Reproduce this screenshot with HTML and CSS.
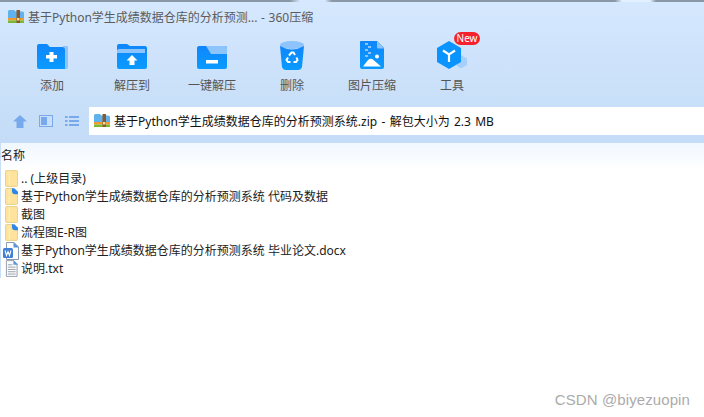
FILE: index.html
```html
<!DOCTYPE html>
<html lang="zh-CN">

<head>
    <meta charset="UTF-8">
    <title>基于Python学生成绩数据仓库的分析预测系统.zip - 360压缩</title>
    <link rel="stylesheet" href="styles.css">
</head>

<body>
    <svg class="defs" width="0" height="0">
        <defs>
            <linearGradient id="blue" x1="0" y1="0" x2="0" y2="1">
                <stop offset="0" stop-color="#0f86fb" />
                <stop offset="1" stop-color="#0a9bff" />
            </linearGradient>
            <symbol id="zipicon" viewBox="0 0 16 16">
                <path d="M0 2.500Q0 1 1.500 1H6l1.500 1.500H14.500Q16 2.500 16 4V9H0Z" fill="#5fb2ee" />
                <rect y="9" width="16" height="2.500" fill="#f09a2c" />
                <rect y="11.500" width="16" height="2.500" fill="#7cb834" />
                <rect x="8.500" y="1" width="3.500" height="13" fill="#8a5a2b" />
                <rect x="9" y="9" width="2.500" height="2.500" fill="#f6dc9a" />
            </symbol>
            <symbol id="folder" viewBox="0 0 14 18">
                <path d="M.5 1.500Q.5 .5 1.500 .5H12.500Q13.500 .5 13.500 1.500V16.500Q13.500 17.500 12.500 17.500H1.500Q.5 17.500 .5 16.500Z" fill="#fde39c" stroke="#e8cd84" />
                <path d="M4.500 1V17" stroke="#fff0c4" stroke-width="1" />
            </symbol>
            <symbol id="linkfolder" viewBox="0 0 14 18">
                <path d="M.5 1.500Q.5 .5 1.500 .5H8L13.500 6V16.500Q13.500 17.500 12.500 17.500H1.500Q.5 17.500 .5 16.500Z" fill="#fde39c" stroke="#e8cd84" />
                <path d="M4.500 1V17" stroke="#fff0c4" stroke-width="1" />
                <path d="M7.500 0H10L14 4V6.500H11Q7.500 6.500 7.500 3Z" fill="#2f86e6" />
            </symbol>
        </defs>
    </svg>

    <header class="header">
        <div class="edge"></div>
        <div class="title-bar">
            <svg class="zip-icon" width="16" height="16"><use href="#zipicon" /></svg>
            <span class="title-text">基于Python学生成绩数据仓库的分析预测... - 360压缩</span>
        </div>

        <nav class="toolbar">
            <div class="tool">
                <svg class="tool-icon" width="32" height="32" viewBox="0 0 32 32">
                    <path d="M27 6H31Q32 6 32 7V27Q32 29 30 29H26Z" fill="#8cc4fb" />
                    <path d="M1 6Q1 4 3 4H11L14 7H26Q29 7 29 10V29H3Q1 29 1 27Z" fill="url(#blue)" />
                    <path d="M13.500 12H17.500V15H21V18.500H17.500V22H13.500V18.500H10V15H13.500Z" fill="#fff" />
                </svg>
                <span class="tool-label">添加</span>
            </div>
            <div class="tool">
                <svg class="tool-icon" width="32" height="32" viewBox="0 0 32 32">
                    <path d="M1 6Q1 4 3 4H11L14 6H29Q31 6 31 8V27Q31 29 29 29H3Q1 29 1 27Z" fill="url(#blue)" />
                    <path d="M3 9H29V13H1V11Q1 9 3 9Z" fill="#8cc4fb" />
                    <path d="M16 15L21.500 20.500H18.500V25H13.500V20.500H10.500Z" fill="#fff" />
                </svg>
                <span class="tool-label">解压到</span>
            </div>
            <div class="tool">
                <svg class="tool-icon" width="32" height="32" viewBox="0 0 32 32">
                    <path d="M1 8Q1 6 3 6H29Q31 6 31 8V27Q31 29 29 29H3Q1 29 1 27Z" fill="url(#blue)" />
                    <path d="M10 6H29Q31 6 31 8V14H15Z" fill="#8cc4fb" />
                    <rect x="10" y="20" width="12" height="3.500" fill="#fff" />
                </svg>
                <span class="tool-label">一键解压</span>
            </div>
            <div class="tool">
                <svg class="tool-icon" width="32" height="32" viewBox="0 0 32 32">
                    <ellipse cx="16" cy="5" rx="12" ry="4" fill="#8cc4fb" />
                    <path d="M4 6Q10 9.500 16 9.500T28 6L26 27Q25 30 22 30H10Q7 30 6 27Z" fill="url(#blue)" />
                    <g fill="none" stroke="#fff" stroke-width="2">
                        <path d="M13 15.500L15.500 12.500H17.500L19 15" />
                        <path d="M20.500 17.500L21.500 20L20 22H17.500" />
                        <path d="M14.500 22H12L10.500 20L12 17.500" />
                    </g>
                </svg>
                <span class="tool-label">删除</span>
            </div>
            <div class="tool">
                <svg class="tool-icon" width="32" height="32" viewBox="0 0 32 32">
                    <path d="M5 1H21L28 8V27Q28 29 26 29H6Q4 29 4 27V2Q4 1 5 1Z" fill="url(#blue)" />
                    <path d="M21 1L28 8.500H22Q21 8.500 21 7.500Z" fill="#8cc4fb" />
                    <g fill="#8cc4fb">
                        <rect x="9" y="3" width="3" height="2" />
                        <rect x="12" y="6" width="3" height="2" />
                        <rect x="9" y="9" width="3" height="2" />
                        <rect x="12" y="12" width="3" height="2" />
                        <rect x="9" y="15" width="3" height="2" />
                    </g>
                    <circle cx="21" cy="16.500" r="2" fill="#fff" />
                    <path d="M7 26.500L12 20Q15 17.500 17.500 20L25 26.500Z" fill="#fff" />
                </svg>
                <span class="tool-label">图片压缩</span>
            </div>
            <div class="tool">
                <svg class="tool-icon" width="32" height="32" viewBox="0 0 32 32">
                    <path d="M25 15L31 18.500V25L25 28.500L21 26V18Z" fill="#a6d0fb" />
                    <path d="M13 1L25 8V22L13 29L1 22V8Z" fill="#0a94ff" />
                    <path d="M7 10.500L13 14.500L19 10.500M13 14.500V22" fill="none" stroke="#fff" stroke-width="2.200" />
                </svg>
                <span class="tool-label">工具</span>
                <span class="badge">New</span>
            </div>
        </nav>

        <div class="address-row">
            <div class="nav-icons">
                <svg width="14" height="13" viewBox="0 0 14 13"><path d="M7 0L14 6.500H10.500V13H3.500V6.500H0Z" fill="#78a9ec" /></svg>
                <svg width="14" height="12" viewBox="0 0 14 12">
                    <rect x=".5" y=".5" width="13" height="11" fill="#c9def8" stroke="#78a9ec" />
                    <rect x="2" y="2" width="6" height="8" fill="#78a9ec" />
                </svg>
                <svg width="14" height="10" viewBox="0 0 14 10">
                    <g fill="#78a9ec">
                        <rect width="2.500" height="2" /><rect x="4" width="10" height="2" />
                        <rect y="4" width="2.500" height="2" /><rect x="4" y="4" width="10" height="2" />
                        <rect y="8" width="2.500" height="2" /><rect x="4" y="8" width="10" height="2" />
                    </g>
                </svg>
            </div>
            <div class="address-box">
                <svg class="zip-icon" width="16" height="16"><use href="#zipicon" /></svg>
                <span>基于Python学生成绩数据仓库的分析预测系统.zip - 解包大小为 2.3 MB</span>
            </div>
        </div>
    </header>

    <main class="list-area">
        <div class="col-head">名称</div>
        <ul class="file-list">
            <li class="file-row"><svg class="file-icon" width="13" height="17"><use href="#folder" /></svg>.. (上级目录)</li>
            <li class="file-row"><svg class="file-icon" width="13" height="17"><use href="#linkfolder" /></svg>基于Python学生成绩数据仓库的分析预测系统 代码及数据</li>
            <li class="file-row"><svg class="file-icon" width="13" height="17"><use href="#folder" /></svg>截图</li>
            <li class="file-row"><svg class="file-icon" width="13" height="17"><use href="#linkfolder" /></svg>流程图E-R图</li>
            <li class="file-row">
                <svg class="file-icon file-icon-doc" width="16" height="18" viewBox="0 0 16 18">
                    <path d="M3.500 .5H11L15.500 5V17.500H3.500Z" fill="#fff" stroke="#8a9ab0" />
                    <path d="M10.500 0L16 5.500H10.500Z" fill="#5d93d8" />
                    <rect y="6" width="10" height="10" rx="1.500" fill="#3f7fd6" />
                    <path d="M2 8.500L3.500 13.500L5 9.500L6.500 13.500L8 8.500" fill="none" stroke="#fff" stroke-width="1.100" />
                </svg>基于Python学生成绩数据仓库的分析预测系统 毕业论文.docx
            </li>
            <li class="file-row">
                <svg class="file-icon" width="13" height="17" viewBox="0 0 14 18">
                    <path d="M1.500 .5H9.500L13 4V17.500H1.500Z" fill="#fff" stroke="#8f98a3" />
                    <path d="M9 0L14 5H9Z" fill="#5d93d8" />
                    <path d="M3 5H8M3 7.500H11.500M3 10H11.500M3 12.500H11.500M3 15H11.500" stroke="#8f98a3" />
                </svg>说明.txt
            </li>
        </ul>
    </main>

    <div class="watermark">CSDN @biyezuopin</div>
</body>

</html>
```

FILE: styles.css
```css
* {
    box-sizing: border-box;
}

html,
body {
    margin: 0;
    height: 417px;
    overflow: hidden;
}

body {
    position: relative;
    font-family: "Noto Sans", "Noto Sans CJK SC", sans-serif;
    font-size: 12px;
    color: #222;
    background-color: #ffffff;
}

.defs {
    position: absolute;
}

.header {
    height: 143px;
    background: linear-gradient(180deg, #d5e8fe, #c4dcf7);
}

.edge {
    height: 2px;
    background: linear-gradient(90deg, #8a97a6 0, #8a97a6 290px, #d5e8fe 300px, #d5e8fe 325px, #8a97a6 332px, #8a97a6 615px, #e3f0ff 622px, #e3f0ff 650px, #8a97a6 656px);
}

.title-bar {
    height: 30px;
    display: flex;
    align-items: center;
    padding-left: 8px;
    color: #5c5c5c;
}

.title-text {
    margin-left: 4px;
    word-spacing: 0.5px;
}

.toolbar {
    display: flex;
    padding: 8px 0 0 12px;
}

.tool {
    position: relative;
    width: 80px;
    display: flex;
    flex-direction: column;
    align-items: center;
}

.tool-icon {
    display: block;
}

.tool-label {
    margin-top: 6px;
    line-height: 16px;
    color: #555;
}

.badge {
    position: absolute;
    top: -8px;
    left: 42px;
    width: 26px;
    height: 13px;
    border-radius: 7px;
    background-color: #f5222d;
    color: #fff;
    font-size: 10px;
    line-height: 13px;
    text-align: center;
}

.address-row {
    display: flex;
    margin-top: 13px;
    height: 28px;
}

.nav-icons {
    width: 89px;
    padding: 0 10px 0 13px;
    display: flex;
    align-items: center;
    justify-content: space-between;
}

.address-box {
    flex: 1;
    display: flex;
    align-items: center;
    gap: 4px;
    padding-left: 5px;
    background-color: #ffffff;
    color: #111;
    word-spacing: 1.2px;
}

.list-area {
    border-left: 1px solid #c8dff9;
}

.col-head {
    height: 27px;
    padding-top: 4px;
    line-height: 18px;
    background: linear-gradient(180deg, #f0f7ff, #ffffff);
}

.file-list {
    list-style: none;
    margin: 0;
    padding: 0;
}

.file-row {
    position: relative;
    height: 18px;
    line-height: 18px;
    padding-left: 20px;
    white-space: nowrap;
}

.file-icon {
    position: absolute;
    left: 4px;
    top: 0;
}

.file-icon-doc {
    left: 2px;
}

.watermark {
    position: absolute;
    right: 14px;
    top: 392px;
    font-family: "Liberation Sans", sans-serif;
    font-size: 15px;
    line-height: 16px;
    letter-spacing: 0.1px;
    color: #ababab;
}
```
